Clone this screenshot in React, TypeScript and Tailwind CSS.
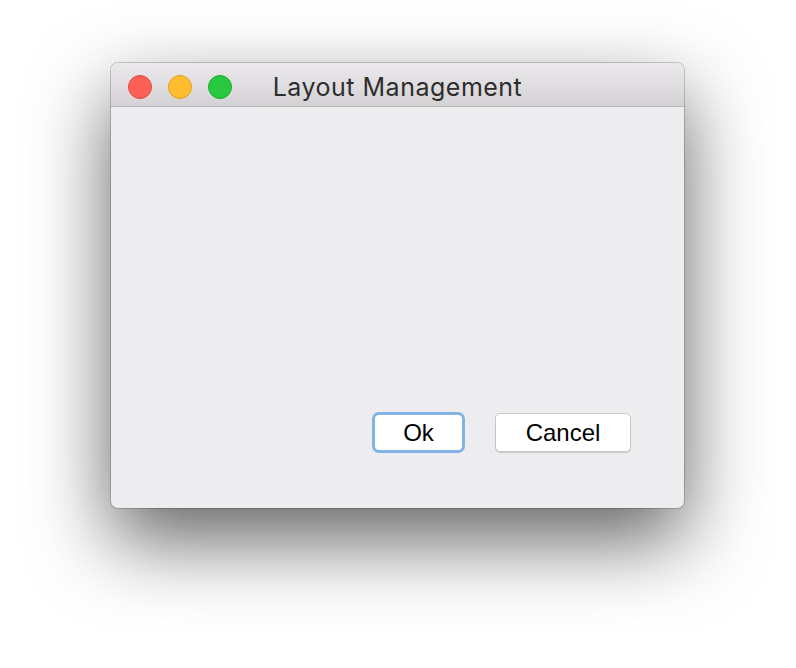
export default function App() {
  return (
    <div className="w-[796px] h-[668px] bg-white pt-[63px] pl-[111px]">
      <div className="w-[573px] h-[445px] rounded-[7px] flex flex-col overflow-hidden bg-[#edecee] shadow-[0_0_0_1px_rgba(0,0,0,0.18),0_32px_80px_rgba(0,0,0,0.62)]">
        {/* title bar */}
        <div className="relative h-[44px] flex items-center justify-center pt-[6px] bg-gradient-to-b from-[#ebe9eb] to-[#d4d2d4] border-b border-[#b9b7b9]">
          <div className="absolute left-[17px] top-[12px] flex gap-[16px]">
            <span className="w-[24px] h-[24px] rounded-full bg-[#fe5f57] border border-[#e2463f]" />
            <span className="w-[24px] h-[24px] rounded-full bg-[#febc2e] border border-[#e1a116]" />
            <span className="w-[24px] h-[24px] rounded-full bg-[#28c840] border border-[#14ae2a]" />
          </div>
          <span className="text-[25px] text-[#2e2d2e] font-['Inter',sans-serif] tracking-[0.5px]">
            Layout Management
          </span>
        </div>

        {/* body */}
        <div className="flex-1 flex justify-end items-end gap-[30px] pr-[53px] pb-[55px] font-['Liberation_Sans',Arial,sans-serif]">
          <button className="w-[93px] h-[41px] rounded-[7px] bg-white border-[3px] border-[#82b2e6] text-[24px] text-black leading-none">
            Ok
          </button>
          <button className="w-[136px] h-[39px] mb-[1px] rounded-[5px] bg-white border border-[#c8c7c8] shadow-[0_1px_1px_rgba(0,0,0,0.15)] text-[24px] text-black leading-none">
            Cancel
          </button>
        </div>
      </div>
    </div>
  );
}
